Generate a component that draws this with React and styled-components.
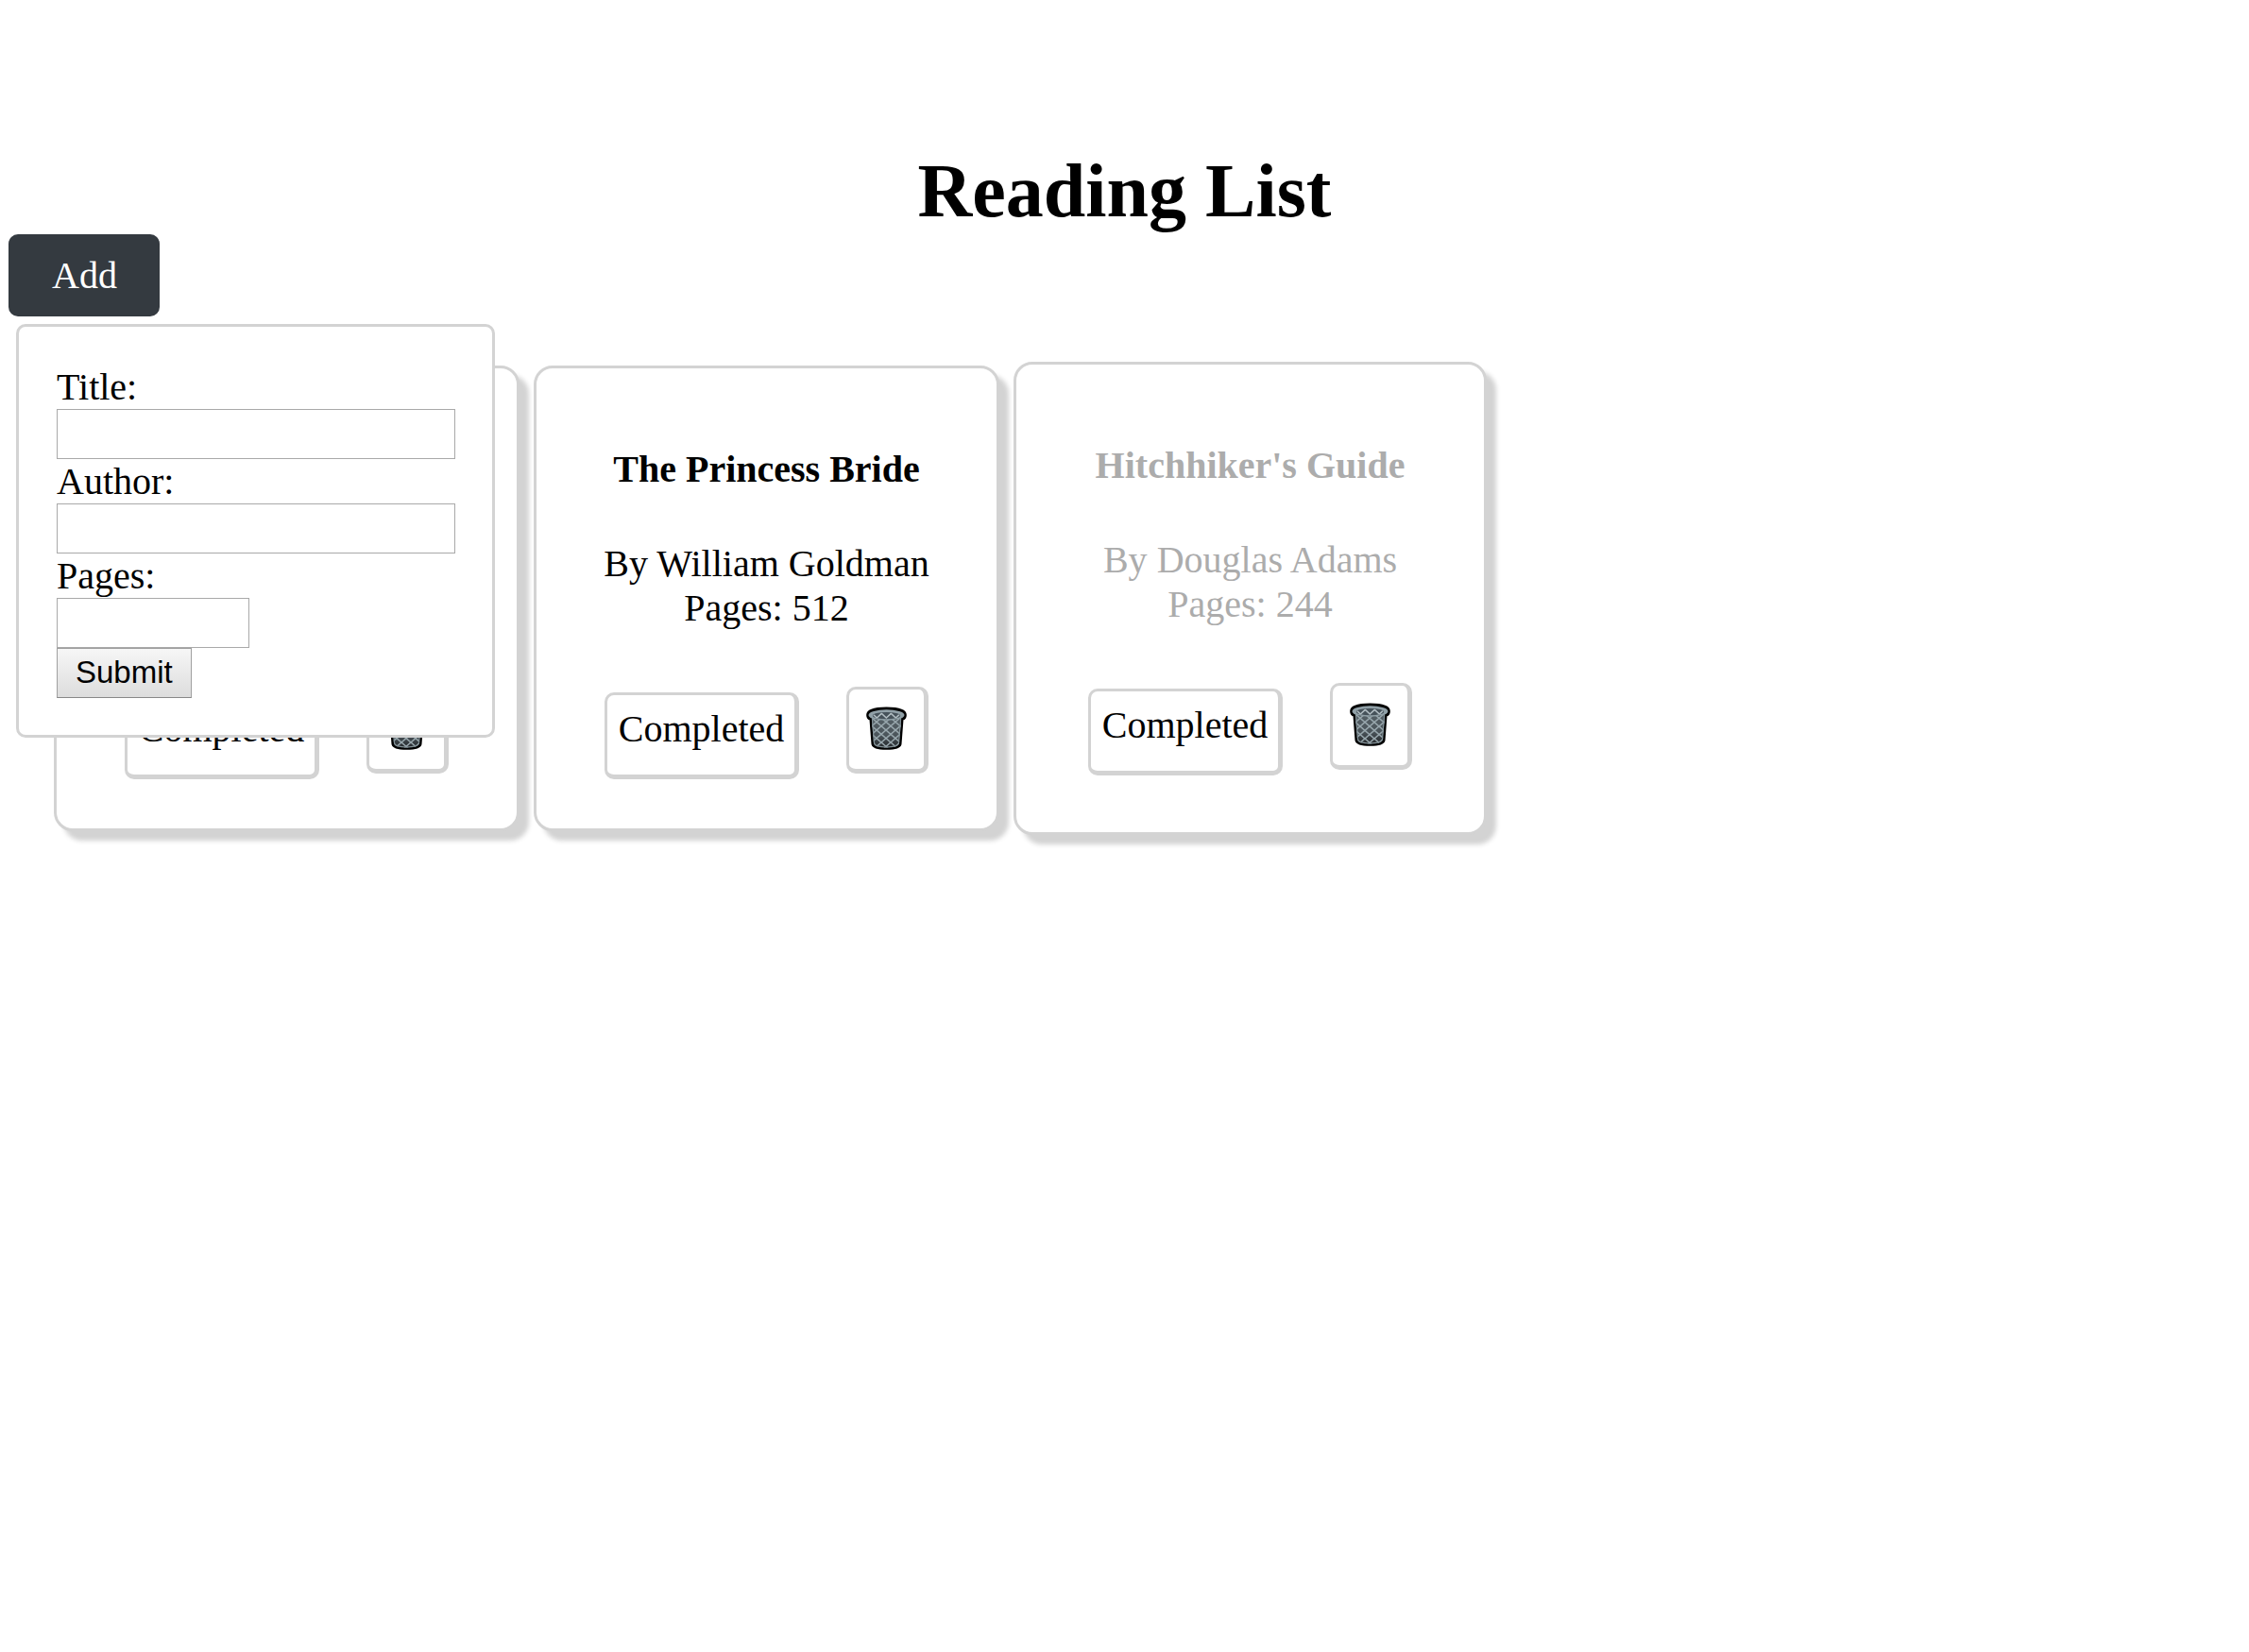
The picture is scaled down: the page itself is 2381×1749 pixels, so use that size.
import React, { useState } from "react";
import styled, { createGlobalStyle } from "styled-components";

const GlobalStyle = createGlobalStyle`
  *, *::before, *::after { box-sizing: border-box; }
  body {
    margin: 0;
    background: #fff;
    color: #000;
    font: 40px/47px "Liberation Serif", "Times New Roman", serif;
  }
  button, input { margin: 0; font: inherit; color: inherit; border-radius: 0; }
`;

const Page = styled.div`
  min-height: 100vh;
  padding: 156px 0 40px;
`;

const Title = styled.h1`
  margin: 0;
  font-size: 80px;
  line-height: 92px;
  text-align: center;
`;

const Toolbar = styled.div`
  position: relative;
  z-index: 1;
  width: max-content;
  margin-left: 9px;
`;

const AddButton = styled.button`
  display: block;
  padding: 20px 45px 20px 46px;
  border: 0;
  border-radius: 10px;
  background: #343a40;
  color: #fff;
  cursor: pointer;
`;

const Popup = styled.form`
  position: absolute;
  top: calc(100% + 8px);
  left: 8px;
  width: 507px;
  padding: 40px 40px 39px;
  border: 3px solid #d3d3d3;
  border-radius: 10px;
  background: #fff;
`;

const Label = styled.label`
  display: block;
`;

const Input = styled.input`
  display: block;
  width: ${(p) => (p.$short ? "204px" : "422px")};
  height: 53px;
  padding: 2px 4px;
  border: 1px solid #a9a9a9;
  background: #fff;
  font: 33px "Liberation Sans", Arial, sans-serif;
  appearance: textfield;
`;

const Submit = styled.button`
  display: block;
  height: 53px;
  padding: 0 19px 2px;
  border: 1px solid #a0a0a0;
  border-bottom-color: #888;
  background: linear-gradient(#f6f6f6, #ddd);
  font: 33px "Liberation Sans", Arial, sans-serif;
`;

const Books = styled.main`
  display: flex;
  flex-wrap: wrap;
  align-items: center;
  gap: 15px;
  margin-top: 48px;
  padding: 0 57px;
`;

const Card = styled.article`
  display: flex;
  flex-direction: column;
  align-items: center;
  width: ${(p) => (p.$done ? "501px" : "493px")};
  min-height: ${(p) => (p.$done ? "501px" : "493px")};
  padding-top: 83px;
  border: 3px solid #d3d3d3;
  border-radius: 20px;
  background: #fff;
  box-shadow: 10px 10px 5px #d3d3d3;
`;

const Details = styled.div`
  color: ${(p) => (p.$done ? "#acacac" : "inherit")};
  text-align: center;
`;

const BookTitle = styled.h2`
  margin: 0 0 53px;
  font-size: 40px;
  line-height: 47px;
`;

const Line = styled.p`
  margin: 0;
`;

const Actions = styled.div`
  display: flex;
  align-items: flex-start;
  gap: 50px;
  margin-top: 60px;
`;

const CardButton = styled.button`
  height: 92px;
  border: 3px solid #d3d3d3;
  border-right-width: 5px;
  border-bottom-width: 5px;
  border-radius: 10px;
  background: #fff;
  cursor: pointer;
`;

const CompletedButton = styled(CardButton)`
  margin-top: 6px;
  padding: 12px 11px 25px 12px;
`;

const TrashButton = styled(CardButton)`
  display: flex;
  justify-content: center;
  align-items: center;
  width: 87px;
  padding: 0 0 2px;
`;

const strands = [-4, -3, -2, -1, 0, 1, 2, 3, 4, 5, 6, 7, 8];

function Trash({ id }) {
  return (
    <svg width="45" height="47" viewBox="0 0 135 141" aria-hidden="true">
      <defs>
        <linearGradient id={`${id}-fill`} x1="0" y1="0" x2="0" y2="1">
          <stop offset="0" stopColor="#566167" />
          <stop offset="0.6" stopColor="#4b555b" />
          <stop offset="1" stopColor="#202326" />
        </linearGradient>
        <clipPath id={`${id}-body`}>
          <path d="M20 36 Q67 50 115 36 L108 117 Q106 130 67 131 Q29 130 27 117 Z" />
        </clipPath>
        <clipPath id={`${id}-mouth`}>
          <ellipse cx="67.500" cy="30" rx="44" ry="11" />
        </clipPath>
      </defs>
      <path
        d="M67.500 5 C98 5 128 11 128 27 C128 35 124 39 118 41 L112 119 Q109 134 67.500 134 Q26 134 23 119 L17 41 C11 39 7 35 7 27 C7 11 37 5 67.500 5 Z"
        fill="#000"
        stroke="#000"
        strokeWidth="7"
        strokeLinejoin="round"
      />
      <g clipPath={`url(#${id}-body)`}>
        <rect x="15" y="30" width="105" height="104" fill={`url(#${id}-fill)`} />
        <g stroke="#98a7ad" strokeWidth="4.500">
          {strands.map((n) => (
            <React.Fragment key={n}>
              <line x1={n * 30 - 9} y1="36" x2={n * 30 + 102} y2="132" />
              <line x1={n * 30 - 9} y1="36" x2={n * 30 - 120} y2="132" />
            </React.Fragment>
          ))}
        </g>
        <path
          d="M20 36 L27 117 Q29 130 67 131 Q106 130 108 117 L115 36"
          fill="none"
          stroke="#819096"
          strokeWidth="7"
        />
      </g>
      <ellipse cx="67.500" cy="27" rx="57" ry="17" fill="#90a0a7" />
      <ellipse cx="67.500" cy="29" rx="44" ry="11" fill="#46525a" />
      <g clipPath={`url(#${id}-mouth)`}>
        <path
          d="M22 22 L37 36 L52 22 L67 36 L82 22 L97 36 L112 22"
          fill="none"
          stroke="#b1bdc2"
          strokeWidth="4.500"
        />
      </g>
    </svg>
  );
}

const books = [
  { id: "dune", title: "Dune", author: "Frank Herbert", pages: 412 },
  { id: "bride", title: "The Princess Bride", author: "William Goldman", pages: 512 },
  { id: "guide", title: "Hitchhiker's Guide", author: "Douglas Adams", pages: 244, done: true },
];

export default function App() {
  const [list, setList] = useState(books);
  const [open, setOpen] = useState(true);

  const toggle = (id) =>
    setList(list.map((b) => (b.id === id ? { ...b, done: !b.done } : b)));
  const remove = (id) => setList(list.filter((b) => b.id !== id));
  const add = (event) => {
    event.preventDefault();
    const data = Object.fromEntries(new FormData(event.currentTarget));
    setList([...list, { ...data, id: `book-${Date.now()}` }]);
    setOpen(false);
  };

  return (
    <>
      <GlobalStyle />
      <Page>
        <Title>Reading List</Title>
        <Toolbar>
          <AddButton type="button" aria-expanded={open} onClick={() => setOpen(!open)}>
            Add
          </AddButton>
          {open && (
            <Popup onSubmit={add}>
              <Label htmlFor="title">Title:</Label>
              <Input id="title" name="title" type="text" />
              <Label htmlFor="author">Author:</Label>
              <Input id="author" name="author" type="text" />
              <Label htmlFor="pages">Pages:</Label>
              <Input id="pages" name="pages" type="number" $short />
              <Submit type="submit">Submit</Submit>
            </Popup>
          )}
        </Toolbar>
        <Books>
          {list.map((b) => (
            <Card key={b.id} $done={b.done}>
              <Details $done={b.done}>
                <BookTitle>{b.title}</BookTitle>
                <Line>By {b.author}</Line>
                <Line>Pages: {b.pages}</Line>
              </Details>
              <Actions>
                <CompletedButton type="button" onClick={() => toggle(b.id)}>
                  Completed
                </CompletedButton>
                <TrashButton type="button" aria-label={`Delete ${b.title}`} onClick={() => remove(b.id)}>
                  <Trash id={b.id} />
                </TrashButton>
              </Actions>
            </Card>
          ))}
        </Books>
      </Page>
    </>
  );
}
